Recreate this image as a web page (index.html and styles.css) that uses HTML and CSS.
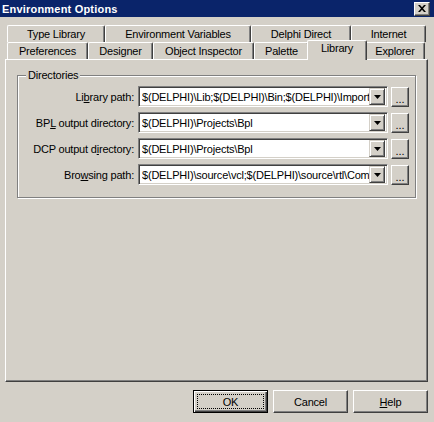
FILE: index.html
```html
<!DOCTYPE html>
<html lang="en">
  <head>
    <meta charset="UTF-8" />
    <title>Environment Options</title>
    <link rel="stylesheet" href="styles.css">
  </head>
  <body>
<div class="window">

  <div class="titlebar">
    <span class="title">Environment Options</span>
    <span class="close">
      <svg width="8" height="7" viewBox="0 0 8 7">
        <path d="M0 0h2l2 2.2L6 0h2L5 3.5 8 7H6L4 4.8 2 7H0l3-3.5z" fill="#000"/>
      </svg>
    </span>
  </div>

  <div class="tabs">
    <div class="tab-row">
      <div class="tab tab-typelib">Type Library</div>
      <div class="tab tab-envvars">Environment Variables</div>
      <div class="tab tab-direct">Delphi Direct</div>
      <div class="tab tab-internet">Internet</div>
    </div>
    <div class="tab-row">
      <div class="tab tab-prefs">Preferences</div>
      <div class="tab tab-designer">Designer</div>
      <div class="tab tab-inspector">Object Inspector</div>
      <div class="tab tab-palette">Palette</div>
      <div class="tab tab-library selected">Library</div>
      <div class="tab tab-explorer">Explorer</div>
    </div>
  </div>

  <div class="page">
    <fieldset class="group">
      <legend>Directories</legend>

      <div class="field">
        <label>Li<u>b</u>rary path:</label>
        <div class="combo">
          <input class="combo-text" readonly value="$(DELPHI)\Lib;$(DELPHI)\Bin;$(DELPHI)\Imports;$(DELPHI)\Projects\Bpl">
          <span class="combo-btn"><svg width="7" height="4" viewBox="0 0 7 4"><path d="M0 0h7L3.5 4z" fill="#000"/></svg></span>
        </div>
        <button class="browse">...</button>
      </div>

      <div class="field">
        <label>BP<u>L</u> output directory:</label>
        <div class="combo">
          <input class="combo-text" readonly value="$(DELPHI)\Projects\Bpl">
          <span class="combo-btn"><svg width="7" height="4" viewBox="0 0 7 4"><path d="M0 0h7L3.5 4z" fill="#000"/></svg></span>
        </div>
        <button class="browse">...</button>
      </div>

      <div class="field">
        <label>DCP output d<u>i</u>rectory:</label>
        <div class="combo">
          <input class="combo-text" readonly value="$(DELPHI)\Projects\Bpl">
          <span class="combo-btn"><svg width="7" height="4" viewBox="0 0 7 4"><path d="M0 0h7L3.5 4z" fill="#000"/></svg></span>
        </div>
        <button class="browse">...</button>
      </div>

      <div class="field">
        <label>Bro<u>w</u>sing path:</label>
        <div class="combo">
          <input class="combo-text" readonly value="$(DELPHI)\source\vcl;$(DELPHI)\source\rtl\Common;$(DELPHI)\source\Internet">
          <span class="combo-btn"><svg width="7" height="4" viewBox="0 0 7 4"><path d="M0 0h7L3.5 4z" fill="#000"/></svg></span>
        </div>
        <button class="browse">...</button>
      </div>
    </fieldset>
  </div>

  <div class="buttons">
    <button class="btn btn-default"><span class="focus">OK</span></button>
    <button class="btn">Cancel</button>
    <button class="btn"><u>H</u>elp</button>
  </div>

</div>
  </body>
</html>
```

FILE: styles.css
```css
body {
  margin: 0;
  background: #d4d0c8;
  color: #000;
  font-family: 'Liberation Sans', Arial, sans-serif;
  font-size: 11px;
  letter-spacing: -0.2px;
}

.window {
  width: 434px;
  height: 422px;
  display: flex;
  flex-direction: column;
  overflow: hidden;
}

/* title bar */
.titlebar {
  height: 17px;
  background: #0a246a;
  display: flex;
  align-items: center;
  justify-content: space-between;
  padding: 0 4px 0 2px;
}

.title {
  color: #fff;
  font-weight: bold;
  font-size: 11px;
  letter-spacing: 0.2px;
}

.close {
  width: 16px;
  height: 14px;
  box-sizing: border-box;
  background: #d4d0c8;
  border: 1px solid;
  border-color: #fff #404040 #404040 #fff;
  box-shadow: inset -1px -1px 0 #808080;
  display: flex;
  align-items: center;
  justify-content: center;
}

/* tabs */
.tabs {
  margin-top: 8px;
  padding-left: 7px;
}

.tab-row {
  display: flex;
  height: 17px;
}

.tab {
  box-sizing: border-box;
  height: 17px;
  line-height: 16px;
  text-align: center;
  white-space: nowrap;
  background: #d4d0c8;
  border-top: 1px solid #fff;
  border-left: 1px solid #fff;
  border-right: 1px solid #404040;
  box-shadow: inset -1px 0 0 #808080;
  border-radius: 2px 2px 0 0;
}

.tab-typelib   { width: 98px; }
.tab-envvars   { width: 146px; }
.tab-direct    { width: 100px; }
.tab-internet  { width: 75px; }

.tab-prefs     { width: 81px; }
.tab-designer  { width: 65px; }
.tab-inspector { width: 101px; }
.tab-palette   { width: 55px; }
.tab-library   { width: 60px; }
.tab-explorer  { width: 60px; }

.tab.selected {
  position: relative;
  z-index: 1;
  height: 20px;
  margin: -2px -2px -1px -2px;
  line-height: 15px;
}

/* page */
.page {
  flex: 1;
  margin: 0 6px 0 5px;
  border: 1px solid;
  border-color: #fff #404040 #404040 #fff;
  box-shadow: inset -1px -1px 0 #808080;
  padding: 0 11px 0 11px;
}

.group {
  margin: 9px 0 0 0;
  padding: 4px 6px 12px 8px;
  border: 1px solid #808080;
  box-shadow: inset 1px 1px 0 #fff, 1px 1px 0 #fff;
  display: flex;
  flex-direction: column;
  gap: 5px;
}

.group legend {
  padding: 0 2px;
  margin-left: 0;
  background: #d4d0c8;
  line-height: 13px;
}

.field {
  display: flex;
  align-items: center;
  height: 21px;
}

.field label {
  flex: 1;
  text-align: right;
  margin-right: 4px;
  white-space: nowrap;
}

.combo {
  width: 250px;
  height: 21px;
  box-sizing: border-box;
  background: #fff;
  border: 1px solid;
  border-color: #808080 #fff #fff #808080;
  box-shadow: inset 1px 1px 0 #404040, inset -1px -1px 0 #d4d0c8;
  display: flex;
  align-items: center;
  padding: 2px;
}

.combo-text {
  flex: 1;
  min-width: 0;
  height: 17px;
  border: 0;
  outline: 0;
  margin: 0;
  padding: 0 0 0 1px;
  background: #fff;
  color: #000;
  font-family: inherit;
  font-size: 11px;
  letter-spacing: -0.2px;
}

.combo-btn {
  width: 16px;
  height: 17px;
  box-sizing: border-box;
  background: #d4d0c8;
  border: 1px solid;
  border-color: #d4d0c8 #404040 #404040 #d4d0c8;
  box-shadow: inset 1px 1px 0 #fff, inset -1px -1px 0 #808080;
  display: flex;
  align-items: center;
  justify-content: center;
}

.browse {
  width: 18px;
  height: 20px;
  margin-left: 3px;
  padding: 0 0 2px 0;
  box-sizing: border-box;
  background: #d4d0c8;
  font-family: inherit;
  font-size: 11px;
  line-height: 10px;
  display: flex;
  align-items: flex-end;
  justify-content: center;
  border: 1px solid;
  border-color: #fff #404040 #404040 #fff;
  box-shadow: inset -1px -1px 0 #808080;
}

/* dialog buttons */
.buttons {
  display: flex;
  justify-content: flex-end;
  gap: 5px;
  padding: 8px 6px 9px 0;
}

.btn {
  width: 75px;
  height: 23px;
  box-sizing: border-box;
  background: #d4d0c8;
  font-family: inherit;
  font-size: 11px;
  letter-spacing: -0.2px;
  color: #000;
  padding: 0;
  border: 1px solid;
  border-color: #fff #404040 #404040 #fff;
  box-shadow: inset -1px -1px 0 #808080;
}

.btn-default {
  border-color: #000;
  box-shadow: inset 1px 1px 0 #fff, inset -1px -1px 0 #404040, inset -2px -2px 0 #808080;
  padding: 3px;
}

.focus {
  display: flex;
  align-items: center;
  justify-content: center;
  height: 100%;
  border: 1px dotted #000;
  box-sizing: border-box;
}
```
